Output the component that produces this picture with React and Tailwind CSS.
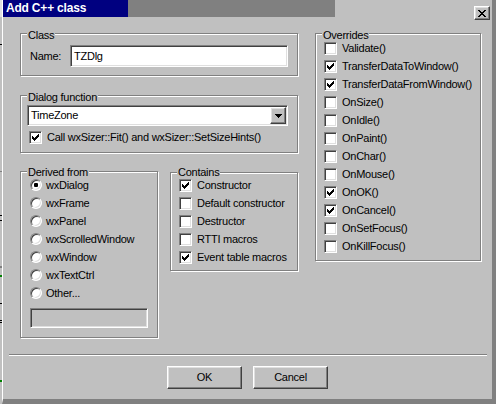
import React from 'react';

const sunken =
  'border border-t-[#808080] border-l-[#808080] border-r-white border-b-white shadow-[inset_1px_1px_0_#404040,inset_-1px_-1px_0_#dfdfdf]';
const raised =
  'border border-t-white border-l-white border-r-[#404040] border-b-[#404040] shadow-[inset_-1px_-1px_0_#808080,inset_1px_1px_0_#dfdfdf]';

function CheckBox({ checked }) {
  return (
    <span className={`w-[13px] h-[13px] shrink-0 box-border bg-white ${sunken}`}>
      {checked && (
        <svg width="11" height="11" viewBox="0 0 11 11" shapeRendering="crispEdges">
          <path
            fill="#000"
            d="M8 2h1v1H8zM7 3h2v1H7zM2 4h1v1H2zM6 4h3v1H6zM2 5h2v1H2zM5 5h3v1H5zM2 6h5v1H2zM3 7h3v1H3zM4 8h1v1H4z"
          />
        </svg>
      )}
    </span>
  );
}

function CheckRow({ label, checked }) {
  return (
    <div className="h-[18px] flex items-center gap-[5px]">
      <CheckBox checked={checked} />
      <span className="leading-[13px] whitespace-nowrap">{label}</span>
    </div>
  );
}

function RadioRow({ label, selected }) {
  return (
    <div className="h-[18px] flex items-center gap-[4px]">
      <span className="w-[12px] h-[12px] shrink-0 box-border rounded-full bg-white border border-t-[#808080] border-l-[#808080] border-r-white border-b-white shadow-[inset_1px_1px_0_#404040,inset_-1px_-1px_0_#dfdfdf] flex items-center justify-center">
        {selected && <span className="w-[4px] h-[4px] bg-black rounded-[1px]" />}
      </span>
      <span className="leading-[13px] whitespace-nowrap">{label}</span>
    </div>
  );
}

function Group({ label, className, labelClass = '-top-[5px]', children }) {
  return (
    <div
      className={`relative box-border border border-[#808080] shadow-[inset_1px_1px_0_#fff,1px_1px_0_#fff] ${className}`}
    >
      <span
        className={`absolute ${labelClass} left-[6px] px-[1px] bg-[#c0c0c0] leading-[12px] whitespace-nowrap`}
      >
        {label}
      </span>
      {children}
    </div>
  );
}

const overrides = [
  ['Validate()', false],
  ['TransferDataToWindow()', true],
  ['TransferDataFromWindow()', true],
  ['OnSize()', false],
  ['OnIdle()', false],
  ['OnPaint()', false],
  ['OnChar()', false],
  ['OnMouse()', false],
  ['OnOK()', true],
  ['OnCancel()', true],
  ['OnSetFocus()', false],
  ['OnKillFocus()', false],
];

const contains = [
  ['Constructor', true],
  ['Default constructor', false],
  ['Destructor', false],
  ['RTTI macros', false],
  ['Event table macros', true],
];

const bases = ['wxDialog', 'wxFrame', 'wxPanel', 'wxScrolledWindow', 'wxWindow', 'wxTextCtrl', 'Other...'];

export default function App() {
  return (
    <div className="w-[496px] h-[404px] bg-[#c0c0c0] flex overflow-hidden font-['Liberation_Sans',Arial,sans-serif] text-[11px] tracking-[-0.25px] text-black">
      {/* bits of the window behind */}
      <svg width="2" height="404" className="shrink-0" shapeRendering="crispEdges">
        <rect x="0" y="0" width="2" height="17" fill="#e0e0e0" />
        <rect x="0" y="44" width="2" height="1" fill="#000" />
        <rect x="0" y="171" width="2" height="1" fill="#808080" />
        <rect x="0" y="215" width="2" height="1" fill="#000" />
        <rect x="0" y="220" width="2" height="1" fill="#000" />
        <rect x="0" y="266" width="2" height="2" fill="#808080" />
        <rect x="0" y="275" width="2" height="2" fill="#008000" />
        <rect x="0" y="303" width="2" height="1" fill="#000" />
        <rect x="0" y="320" width="2" height="1" fill="#000" />
        <rect x="0" y="322" width="2" height="1" fill="#000" />
        <rect x="0" y="380" width="2" height="2" fill="#008000" />
      </svg>

      <div className="flex-1 flex flex-col box-border border-l border-l-white border-r-4 border-r-[#808080] border-b-[5px] border-b-[#808080]">
        {/* title bar */}
        <div className="h-[17px] shrink-0 flex">
          <div className="w-[125px] bg-[#000080] text-white font-bold text-[12px] tracking-[-0.2px] leading-[17px] pl-[3px] whitespace-nowrap">
            Add C++ class
          </div>
          <div className="w-[207px] bg-[#808080]" />
          <div className="flex-1" />
          <button
            className={`w-[16px] h-[14px] mt-[6px] mr-[2px] box-border bg-[#c0c0c0] ${raised} flex items-center justify-center relative z-10`}
          >
            <svg width="8" height="7" viewBox="0 0 8 7" shapeRendering="crispEdges">
              <path
                fill="#000"
                d="M0 0h2v1H0zM6 0h2v1H6zM1 1h2v1H1zM5 1h2v1H5zM2 2h4v1H2zM3 3h2v1H3zM2 4h4v1H2zM1 5h2v1H1zM5 5h2v1H5zM0 6h2v1H0zM6 6h2v1H6z"
              />
            </svg>
          </button>
        </div>

        {/* body */}
        <div className="flex pl-[17px] pt-[16px]">
          <div className="w-[278px] flex flex-col">
            <Group label="Class" className="h-[43px] flex items-start pt-[11px] pl-[9px] pr-[9px]">
              <span className="leading-[22px] w-[40px]">Name:</span>
              <div className={`flex-1 h-[22px] box-border bg-white ${sunken} flex items-center pl-[3px]`}>
                <span className="leading-[13px]">TZDlg</span>
              </div>
            </Group>

            <Group label="Dialog function" className="h-[58px] mt-[19px] pt-[9px] pl-[6px] pr-[9px]">
              <div className={`h-[21px] box-border bg-white ${sunken} flex items-center pl-[3px] pr-[1px]`}>
                <span className="flex-1 leading-[13px]">TimeZone</span>
                <span
                  className={`w-[16px] h-[17px] box-border bg-[#c0c0c0] ${raised} flex items-center justify-center`}
                >
                  <svg width="7" height="4" viewBox="0 0 7 4" shapeRendering="crispEdges">
                    <path fill="#000" d="M0 0h7v1H0zM1 1h5v1H1zM2 2h3v1H2zM3 3h1v1H3z" />
                  </svg>
                </span>
              </div>
              <div className="mt-[2px] pl-[2px]">
                <CheckRow label="Call wxSizer::Fit() and wxSizer::SetSizeHints()" checked />
              </div>
            </Group>

            <div className="flex mt-[18px] items-start">
              <Group
                label="Derived from"
                labelClass="-top-[6px]"
                className="w-[138px] h-[167px] pt-[4px] pl-[9px]"
              >
                {bases.map((b, i) => (
                  <RadioRow key={b} label={b} selected={i === 0} />
                ))}
                <div className={`w-[118px] h-[20px] mt-[6px] box-border bg-[#c0c0c0] ${sunken}`} />
              </Group>

              <Group
                label="Contains"
                labelClass="-top-[7px]"
                className="w-[128px] h-[99px] ml-[12px] mt-[1px] pt-[3px] pl-[8px]"
              >
                {contains.map(([l, c]) => (
                  <CheckRow key={l} label={l} checked={c} />
                ))}
              </Group>
            </div>
          </div>

          <Group label="Overrides" className="w-[166px] h-[228px] ml-[17px] pt-[5px] pl-[8px]">
            {overrides.map(([l, c]) => (
              <CheckRow key={l} label={l} checked={c} />
            ))}
          </Group>
        </div>

        {/* separator */}
        <div className="h-[2px] mt-[16px] ml-[6px] mr-[5px] border-t border-t-[#808080] border-b border-b-white" />

        {/* buttons */}
        <div className="flex justify-center gap-[11px] mt-[10px]">
          <button className={`w-[75px] h-[23px] box-border bg-[#c0c0c0] ${raised} leading-[13px]`}>OK</button>
          <button className={`w-[75px] h-[23px] box-border bg-[#c0c0c0] ${raised} leading-[13px]`}>Cancel</button>
        </div>
      </div>
    </div>
  );
}
